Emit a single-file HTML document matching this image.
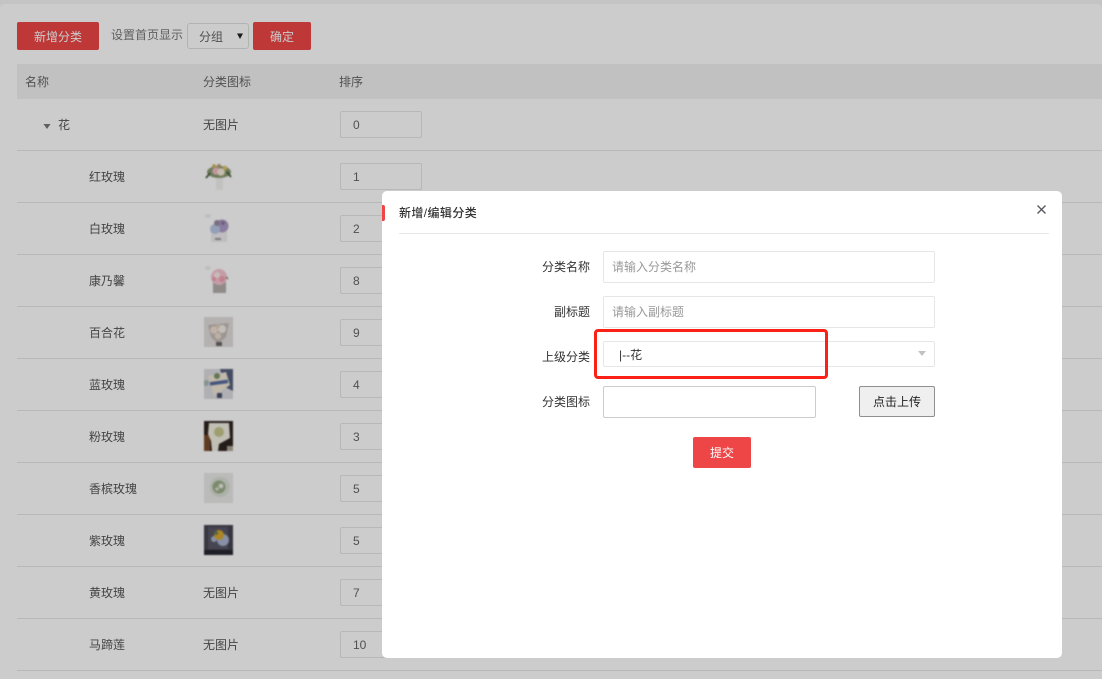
<!DOCTYPE html>
<html lang="zh"><head><meta charset="utf-8"><title>分类</title>
<style>
html,body{margin:0;padding:0}
body{width:1102px;height:679px;overflow:hidden;position:relative;background:#fff;font-family:"Liberation Sans","Noto Sans CJK SC",sans-serif;font-size:12px;color:#555}
.a{position:absolute;box-sizing:border-box}
.t{position:absolute;white-space:nowrap;line-height:16px;height:16px}
.btn{position:absolute;box-sizing:border-box;background:#ee4646;color:#fff;border-radius:2px;text-align:center}
.line{position:absolute;left:17px;width:1085px;height:1px;background:#e6e6e6}
.num{position:absolute;left:340px;width:82px;height:27px;box-sizing:border-box;border:1px solid #e6e6e6;border-radius:2px;background:#fff;padding-left:12px;line-height:27px;font-size:12px;color:#666}
.in{position:absolute;box-sizing:border-box;background:#fff;border:1px solid #e6e6e6;border-radius:2px;line-height:30px;padding-left:8px;color:#999}
.lb{position:absolute;width:70px;left:520px;text-align:right;line-height:16px;color:#333;white-space:nowrap}
svg{position:absolute;overflow:hidden}
svg.f{filter:blur(.8px)}
</style></head><body>
<div class="a" style="left:0;top:0;width:1102px;height:679px;background:#f5f5f5"></div>
<div class="a" style="left:0;top:4px;width:1102px;height:675px;background:#fff;border-radius:4px 4px 0 0"></div>

<div class="btn" style="left:17px;top:22px;width:82px;height:28px;line-height:30px">新增分类</div>
<div class="t" style="left:111px;top:27px;color:#777">设置首页显示</div>
<div class="a" style="left:187px;top:23px;width:62px;height:26px;border:1px solid #e0e0e0;border-radius:3px;background:#fff"></div>
<div class="t" style="left:199px;top:29px;color:#666">分组</div>
<svg style="left:236px;top:33px" width="8" height="7"><path d="M1 0.5H7L4 6Z" fill="#222"/></svg>
<div class="btn" style="left:253px;top:22px;width:58px;height:28px;line-height:30px">确定</div>

<div class="a" style="left:17px;top:64px;width:1085px;height:35px;background:#f2f2f2"></div>
<div class="t" style="left:25px;top:74px;color:#666">名称</div>
<div class="t" style="left:203px;top:74px;color:#666">分类图标</div>
<div class="t" style="left:339px;top:74px;color:#666">排序</div>

<svg style="left:43px;top:123px" width="8" height="7"><path d="M0.5 1H7.5L4 6Z" fill="#777"/></svg>
<div class="t" style="left:58px;top:117px">花</div>
<div class="t" style="left:203px;top:117px">无图片</div>
<div class="num" style="top:111px">0</div>
<div class="line" style="top:150px"></div>

<div class="t" style="left:89px;top:169px">红玫瑰</div><div class="num" style="top:163px">1</div><div class="line" style="top:202px"></div>
<div class="t" style="left:89px;top:221px">白玫瑰</div><div class="num" style="top:215px">2</div><div class="line" style="top:254px"></div>
<div class="t" style="left:89px;top:273px">康乃馨</div><div class="num" style="top:267px">8</div><div class="line" style="top:306px"></div>
<div class="t" style="left:89px;top:325px">百合花</div><div class="num" style="top:319px">9</div><div class="line" style="top:358px"></div>
<div class="t" style="left:89px;top:377px">蓝玫瑰</div><div class="num" style="top:371px">4</div><div class="line" style="top:410px"></div>
<div class="t" style="left:89px;top:429px">粉玫瑰</div><div class="num" style="top:423px">3</div><div class="line" style="top:462px"></div>
<div class="t" style="left:89px;top:481px">香槟玫瑰</div><div class="num" style="top:475px">5</div><div class="line" style="top:514px"></div>
<div class="t" style="left:89px;top:533px">紫玫瑰</div><div class="num" style="top:527px">5</div><div class="line" style="top:566px"></div>
<div class="t" style="left:89px;top:585px">黄玫瑰</div><div class="t" style="left:203px;top:585px">无图片</div><div class="num" style="top:579px">7</div><div class="line" style="top:618px"></div>
<div class="t" style="left:89px;top:637px">马蹄莲</div><div class="t" style="left:203px;top:637px">无图片</div><div class="num" style="top:631px">10</div><div class="line" style="top:670px"></div>

<svg class="f" style="left:204px;top:161px" width="29" height="31" viewBox="0 0 29 31"><rect x="12" y="16" width="7" height="13" rx="2" fill="#f2f2f0"/><ellipse cx="15" cy="11" rx="12" ry="6" fill="#8a9a70"/><circle cx="12" cy="10" r="3.8" fill="#efbcc8"/><circle cx="17" cy="11" r="3.8" fill="#f6ecd8"/><circle cx="21" cy="7" r="2.2" fill="#d8c468"/><circle cx="10" cy="5" r="1.8" fill="#d0b050"/><circle cx="15" cy="5" r="2" fill="#b8a070"/><path d="M2 17L6 12M27 16L23 11" stroke="#3c5a38" stroke-width="1.8"/></svg>
<svg class="f" style="left:204px;top:213px" width="29" height="31" viewBox="0 0 29 31"><rect x="7" y="17" width="16" height="12" fill="#efedef"/><circle cx="18" cy="13" r="6.5" fill="#ac9cc6"/><circle cx="11" cy="16" r="5" fill="#b8c8e6"/><circle cx="13" cy="10" r="3" fill="#9a8aa0"/><circle cx="19" cy="10" r="2" fill="#8a7aa0"/><rect x="11" y="25" width="6" height="2" fill="#999"/><ellipse cx="4" cy="3" rx="3" ry="2" fill="#eee"/></svg>
<svg class="f" style="left:204px;top:265px" width="29" height="31" viewBox="0 0 29 31"><rect x="9" y="17" width="13" height="11" fill="#b4aeac"/><circle cx="15" cy="12" r="8" fill="#f6c4d0"/><circle cx="13" cy="10" r="3" fill="#fae8e8"/><circle cx="18" cy="14" r="3" fill="#f0a0b0"/><circle cx="10" cy="14" r="2" fill="#f0a0b0"/><path d="M22 12L24 14" stroke="#7c8c70" stroke-width="1.5"/><ellipse cx="4" cy="3" rx="3" ry="2" fill="#eee"/></svg>
<svg class="f" style="left:204px;top:317px" width="29" height="30" viewBox="0 0 29 30"><rect width="29" height="30" fill="#e2dedc"/><path d="M4 8L25 6L22 20L14 27L7 20Z" fill="#c2bcba"/><circle cx="10" cy="13" r="3.8" fill="#f2dfcf"/><circle cx="18" cy="12" r="4" fill="#f6efe4"/><circle cx="14" cy="19" r="3.2" fill="#ecdccc"/><circle cx="14" cy="9" r="2" fill="#d8d0b8"/><rect x="12" y="25" width="6" height="4" fill="#6c6664"/></svg>
<svg class="f" style="left:204px;top:369px" width="29" height="30" viewBox="0 0 29 30"><rect width="29" height="30" fill="#dcdce2"/><path d="M16 0H29V22L21 18Z" fill="#56607c"/><path d="M4 7L22 3L26 16L10 27Z" fill="#f0e8d8"/><rect x="6" y="12" width="18" height="3.5" fill="#566a9c" transform="rotate(-8 14 14)"/><circle cx="13" cy="7" r="3" fill="#7c9468"/><circle cx="2" cy="14" r="3" fill="#a8b8b0"/><rect x="13" y="24" width="5" height="5" fill="#49506a"/></svg>
<svg class="f" style="left:204px;top:421px" width="29" height="30" viewBox="0 0 29 30"><rect width="29" height="30" fill="#2e2320"/><rect y="14" width="6" height="16" fill="#7a4a2a"/><path d="M5 2H25L26 17L15 23L14 30H8L7 20L4 13Z" fill="#f2eee2"/><circle cx="15" cy="11" r="5" fill="#c6c68e"/><rect x="23" y="25" width="6" height="5" fill="#b0a898"/></svg>
<svg class="f" style="left:204px;top:473px" width="29" height="30" viewBox="0 0 29 30"><rect width="29" height="30" fill="#eaeae8"/><circle cx="16" cy="14" r="10" fill="#d8ded4"/><circle cx="15" cy="14" r="6.5" fill="#9aac88"/><circle cx="17" cy="13" r="2.4" fill="#ecece0"/><circle cx="13" cy="16" r="1.8" fill="#e0e0cc"/></svg>
<svg class="f" style="left:204px;top:525px" width="29" height="30" viewBox="0 0 29 30"><rect width="29" height="30" fill="#45434f"/><rect x="4" y="2" width="20" height="22" fill="#595766"/><circle cx="19" cy="15" r="6" fill="#a8b4d0"/><circle cx="10" cy="14" r="3" fill="#a8b4d0"/><circle cx="15" cy="10" r="5" fill="#d8a830"/><circle cx="12" cy="8" r="2" fill="#6c7c50"/><rect y="25" width="29" height="5" fill="#262630"/></svg>

<div class="a" style="left:0;top:0;width:1102px;height:679px;background:rgba(0,0,0,.2)"></div>

<div class="a" style="left:382px;top:191px;width:680px;height:467px;background:#fff;border-radius:5px"></div>
<div class="a" style="left:382px;top:205px;width:3px;height:16px;background:#ee4646;border-radius:0 2px 2px 0"></div>
<div class="t" style="left:399px;top:205px;font-weight:500;color:#333;letter-spacing:.4px">新增/编辑分类</div>
<div class="a" style="left:399px;top:233px;width:650px;height:1px;background:#e6e6e6"></div>
<svg style="left:1036px;top:204px" width="11" height="11" viewBox="0 0 11 11"><path d="M1.5 1.5L9.5 9.5M9.5 1.5L1.5 9.5" stroke="#555560" stroke-width="1.3" fill="none"/></svg>

<div class="lb" style="top:259px">分类名称</div>
<div class="in" style="left:603px;top:251px;width:332px;height:32px">请输入分类名称</div>
<div class="lb" style="top:304px">副标题</div>
<div class="in" style="left:603px;top:296px;width:332px;height:32px">请输入副标题</div>
<div class="lb" style="top:349px">上级分类</div>
<div class="in" style="left:603px;top:341px;width:332px;height:26px;line-height:27px;padding-left:15px;color:#333">|--花</div>
<svg style="left:917px;top:350px" width="10" height="7"><path d="M1 1H9L5 6Z" fill="#c2c2c2"/></svg>
<div class="lb" style="top:394px">分类图标</div>
<div class="a" style="left:603px;top:386px;width:213px;height:32px;background:#fff;border:1px solid #ccc;border-radius:2px"></div>
<div class="a" style="left:859px;top:386px;width:76px;height:31px;background:#efefef;border:1px solid #8f8f8f;border-radius:2px;text-align:center;line-height:30px;color:#222">点击上传</div>
<div class="btn" style="left:693px;top:437px;width:58px;height:31px;line-height:32px">提交</div>
<div class="a" style="left:594px;top:329px;width:234px;height:50px;border:3px solid #fb2116;border-radius:4px"></div>
</body></html>
